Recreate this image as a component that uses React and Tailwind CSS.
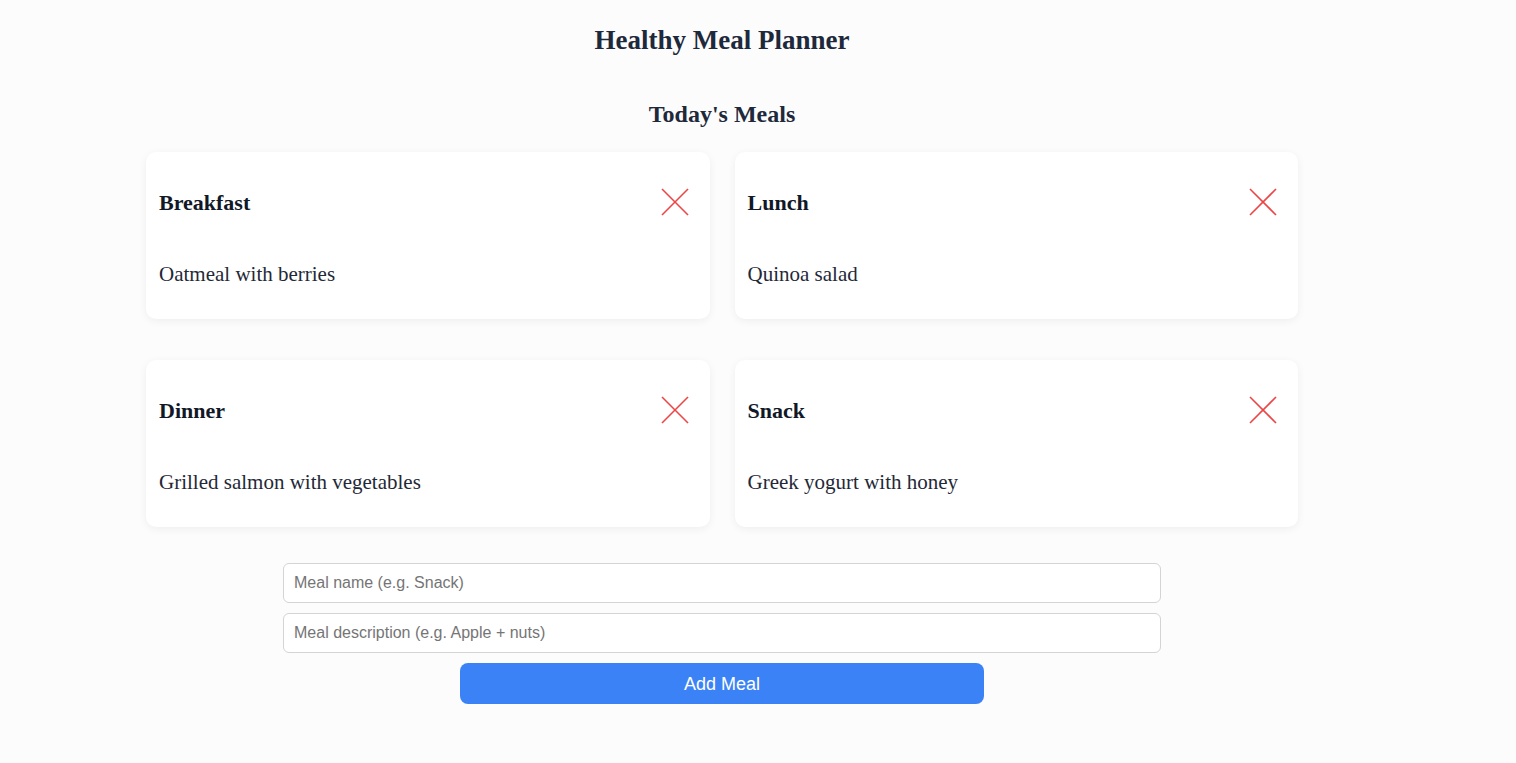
import { useState } from 'react';

const initialMeals = [
  { id: 1, name: 'Breakfast', description: 'Oatmeal with berries' },
  { id: 2, name: 'Lunch', description: 'Quinoa salad' },
  { id: 3, name: 'Dinner', description: 'Grilled salmon with vegetables' },
  { id: 4, name: 'Snack', description: 'Greek yogurt with honey' },
];

function CloseIcon() {
  return (
    <svg width="28" height="28" viewBox="0 0 28 28" fill="none">
      <line x1="1" y1="1" x2="27" y2="27" stroke="#ef4444" strokeWidth="1.6" />
      <line x1="27" y1="1" x2="1" y2="27" stroke="#ef4444" strokeWidth="1.6" />
    </svg>
  );
}

export default function App() {
  const [meals, setMeals] = useState(initialMeals);
  const [name, setName] = useState('');
  const [description, setDescription] = useState('');

  const handleAdd = () => {
    if (!name.trim() || !description.trim()) return;
    setMeals([...meals, { id: Date.now(), name, description }]);
    setName('');
    setDescription('');
  };

  const handleDelete = (id) => {
    setMeals(meals.filter((meal) => meal.id !== id));
  };

  return (
    <div className="min-h-[763px] bg-[#fcfcfc] pr-[72px] pt-[24px] pb-[40px] font-['Liberation_Serif',serif]">
      <h1 className="text-center text-[27px] leading-[32px] font-bold text-[#1e293b]">
        Healthy Meal Planner
      </h1>

      <h2 className="mt-[43px] text-center text-[24px] leading-[30px] font-bold text-[#1e293b]">
        Today's Meals
      </h2>

      <div className="mx-auto mt-[23px] grid w-[1152px] grid-cols-2 gap-x-[25px] gap-y-[41px]">
        {meals.map((meal) => (
          <div
            key={meal.id}
            className="h-[167px] rounded-[10px] bg-white pl-[13px] pr-[21px] pt-[36px] shadow-[0_2px_8px_rgba(0,0,0,0.06)]"
          >
            <div className="flex h-[28px] items-center justify-between">
              <h3 className="pt-[2px] text-[22px] leading-[28px] font-bold text-[#111827]">{meal.name}</h3>
              <button onClick={() => handleDelete(meal.id)} className="cursor-pointer">
                <CloseIcon />
              </button>
            </div>
            <p className="mt-[45px] text-[21px] leading-[26px] text-[#1f2937]">{meal.description}</p>
          </div>
        ))}
      </div>

      <div className="mt-[36px] flex flex-col items-center gap-[10px] font-['Liberation_Sans',Arial,sans-serif]">
        <input
          value={name}
          onChange={(e) => setName(e.target.value)}
          placeholder="Meal name (e.g. Snack)"
          className="h-[40px] w-[878px] rounded-[6px] border border-[#d4d4d4] bg-white px-[10px] text-[16px] text-[#111827] outline-none placeholder:text-[#757575]"
        />
        <input
          value={description}
          onChange={(e) => setDescription(e.target.value)}
          placeholder="Meal description (e.g. Apple + nuts)"
          className="h-[40px] w-[878px] rounded-[6px] border border-[#d4d4d4] bg-white px-[10px] text-[16px] text-[#111827] outline-none placeholder:text-[#757575]"
        />
        <button
          onClick={handleAdd}
          className="h-[41px] w-[524px] rounded-[8px] bg-[#3b82f6] pt-[2px] text-[18px] text-white"
        >
          Add Meal
        </button>
      </div>
    </div>
  );
}
